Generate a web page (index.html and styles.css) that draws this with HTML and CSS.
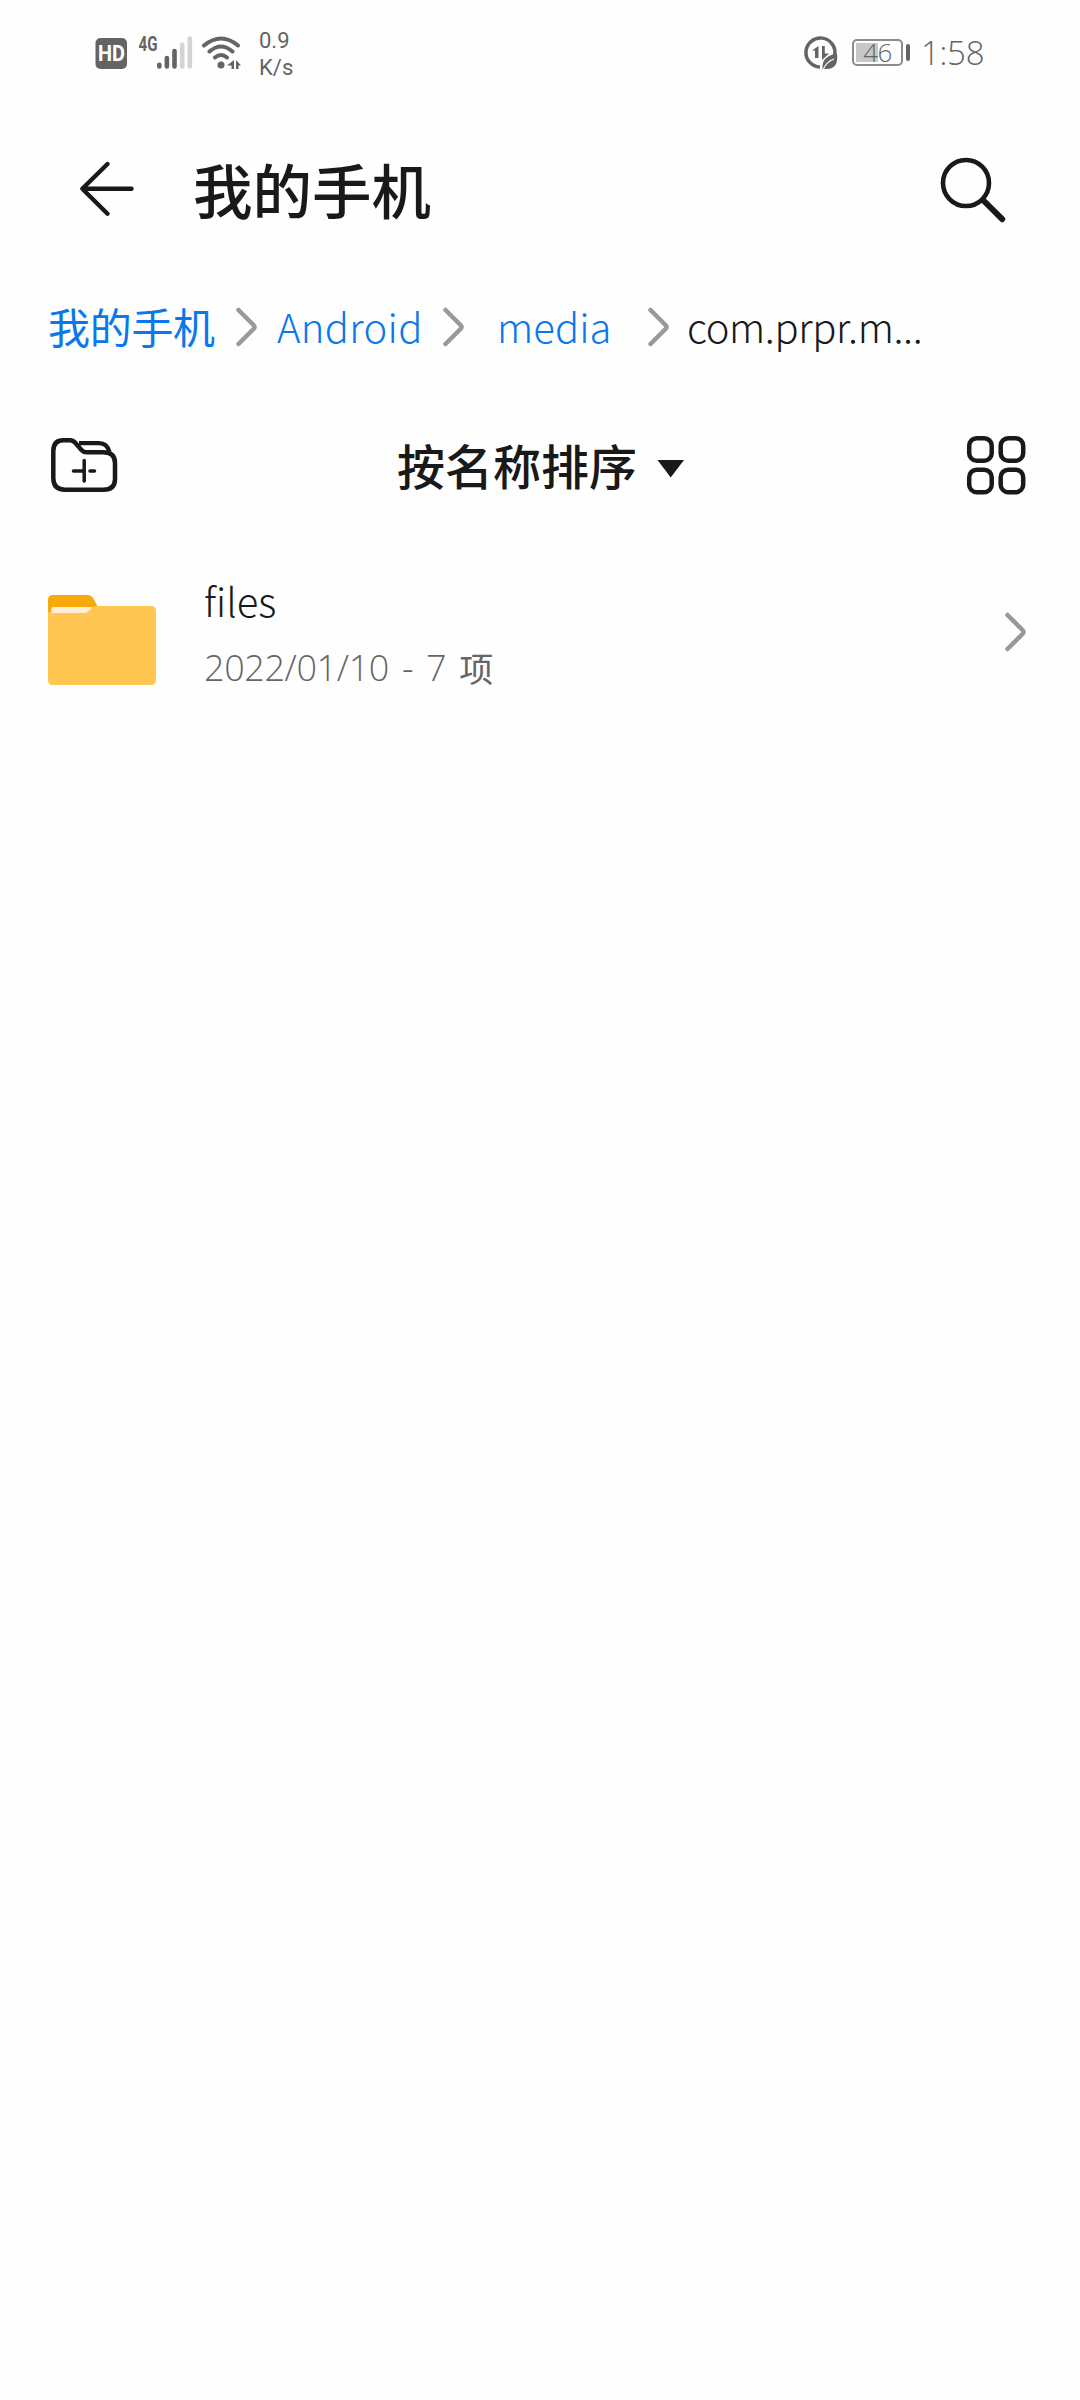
FILE: index.html
```html
<!DOCTYPE html>
<html lang="zh-CN">
<head>
<meta charset="utf-8">
<title>我的手机</title>
<link rel="stylesheet" href="styles.css">
</head>
<body>
<header class="status">
  <svg class="status-left" width="166" height="40" viewBox="90 32 166 40">
    <rect x="95.500" y="38" width="31.500" height="31" rx="5" fill="#646464"/>
    <text class="hd" x="98" y="61" textLength="27" lengthAdjust="spacingAndGlyphs">HD</text>
    <text class="g4" x="138.500" y="51" textLength="19" lengthAdjust="spacingAndGlyphs">4G</text>
    <g stroke="#646464" stroke-width="4.600" stroke-linecap="round"><path d="M159.300 64.800v1.700M166.900 58v8.500M174.500 51v15.500"/><path stroke="#d4d4d4" d="M182.200 44.500v22M189.800 38.500v28"/></g>
    <g fill="none" stroke="#646464" stroke-width="4" stroke-linecap="round"><path d="M204 45.500Q221 31.500 238 45.500M209.500 51.500Q221 41.500 232.500 51.500M215 57.500Q221 52.500 227 57.500"/></g>
    <circle cx="221" cy="65" r="3.500" fill="#646464"/>
    <path fill="#646464" d="M234 60v9h-2.500v-3.500H227zM236 60l5 5.500h-2.500V69H236z"/>
  </svg>
  <div class="speed"><span>0.9</span><span>K/s</span></div>
  <svg class="saver" width="36" height="36" viewBox="803 35 36 36">
    <path fill="none" stroke="#646464" stroke-width="3.500" d="M834.700 55A14.500 14.500 0 1 0 820 67"/>
    <path fill="#646464" d="M818.500 46v12H815v-7.500h-3zM822 46h2.800v7.500h4.200L822 60z"/>
    <path fill="#646464" d="M837 53.500Q839 70 825 69L822.500 69.500Q821 56 837 53.500z"/>
    <path fill="none" stroke="#fff" stroke-width="1.200" d="M823 70Q826 62 834 59"/>
  </svg>
  <div class="battery"><span>46</span></div>
  <span class="clock">1:58</span>
</header>
<div class="titlebar">
  <svg width="60" height="60" viewBox="76 158 60 60"><path class="line" stroke-width="4.400" d="M131.500 188.800H82.500M107.500 164L82.300 188.800L107.500 213.800"/></svg>
  <h1>我的手机</h1>
  <svg class="search" width="70" height="70" viewBox="938 154 70 70"><circle class="line" cx="966" cy="183" r="23" stroke-width="4.600"/><path class="line" stroke-width="6" d="M984 201L1002.200 219.200"/></svg>
</div>
<nav class="crumbs">
  <a class="c1">我的手机</a>
  <svg class="chev" width="22" height="40" viewBox="0 0 22 40"><path d="M2.500 3L17.500 18Q19.500 20 17.500 22L2.500 37"/></svg>
  <a class="c2">Android</a>
  <svg class="chev" width="22" height="40" viewBox="0 0 22 40"><path d="M2.500 3L17.500 18Q19.500 20 17.500 22L2.500 37"/></svg>
  <a class="c3">media</a>
  <svg class="chev" width="22" height="40" viewBox="0 0 22 40"><path d="M2.500 3L17.500 18Q19.500 20 17.500 22L2.500 37"/></svg>
  <span class="c4">com.prpr.m...</span>
</nav>
<div class="toolbar">
  <svg class="new-folder" width="70" height="60" viewBox="49 436 70 60">
    <path class="line" stroke-width="4.500" d="M63.500 440.200H70Q73 440.200 75 442.500L81.500 450Q83.500 452.300 86.500 452.300H103Q115 452.300 115 463V479Q115 489.700 103.500 489.700H65Q53.300 489.700 53.300 478V451Q53.300 440.200 63.500 440.200z"/>
    <path fill="none" stroke="#191919" stroke-width="4.200" d="M79 443.200H99Q107 443.200 109.500 452"/>
    <path class="line" stroke-width="3.500" d="M84.200 460.500V481M73.500 471H84M90 471H94.500"/>
  </svg>
  <div class="sort"><span>按名称排序</span><svg width="28" height="20" viewBox="0 0 28 20"><path fill="#191919" d="M.500 1H27L13.700 18.500z"/></svg></div>
  <svg width="62" height="62" viewBox="965 434 62 62"><g class="line" stroke-width="4.500"><rect x="969.200" y="438.200" width="22.500" height="22.500" rx="7.500"/><rect x="1000.700" y="438.200" width="22.500" height="22.500" rx="7.500"/><rect x="969.200" y="469.700" width="22.500" height="22.500" rx="7.500"/><rect x="1000.700" y="469.700" width="22.500" height="22.500" rx="7.500"/></g></svg>
</div>
<main class="row">
  <svg class="folder" width="108" height="92" viewBox="48 594 108 92">
    <path fill="#f9a80c" d="M48 612V600Q48 595 53 595H87Q91 595 93 598L98 607V614H48z"/>
    <path fill="#ffc751" d="M48 612H88L94 606H151Q156 606 156 611V680Q156 685 151 685H53Q48 685 48 680z"/>
    <path fill="#fff0d5" d="M51.500 613V608.500Q51.500 607 53 607H93L89 611Q87 613 84 613z"/>
  </svg>
  <div class="info"><span class="name">files</span><span class="meta"><span class="date">2022/01/10 - 7</span><span class="unit">项</span></span></div>
  <svg class="chev" width="22" height="40" viewBox="0 0 22 40"><path d="M2.500 3L17.500 18Q19.500 20 17.500 22L2.500 37"/></svg>
</main>
</body>
</html>
```
FILE: styles.css
```css
body {
  margin: 0;
  width: 1080px;
  height: 2400px;
  background: #fefefe;
  color: #191919;
  font-family: "Noto Sans CJK SC", sans-serif;
}

svg { display: block; flex: none; }
span, a, h1 { white-space: nowrap; }

.line {
  fill: none;
  stroke: #191919;
  stroke-linecap: round;
  stroke-linejoin: round;
}

.status {
  display: flex;
  box-sizing: border-box;
  height: 104px;
  padding: 0 0 0 90px;
  color: #646464;
}

.status-left { margin-top: 32px; }
.hd { font: 700 22px Roboto, sans-serif; fill: #fff; }
.g4 { font: 700 20px Roboto, sans-serif; fill: #646464; }

.speed {
  display: flex;
  flex-direction: column;
  width: 546px;
  margin: 27px 0 0 3px;
  font: 400 22px/27px Roboto, sans-serif;
}

.saver { margin: 35px 0 0 -2px; }

.battery {
  position: relative;
  box-sizing: border-box;
  width: 51px;
  height: 27px;
  margin: 39px 0 0 13px;
  border: 2px solid #8b8b8b;
  border-radius: 5px;
  background: linear-gradient(#c8c8c8, #c8c8c8) 2px 2px / 22px 19px no-repeat;
  font: 300 26px/22px "Open Sans", sans-serif;
  letter-spacing: -0.5px;
  text-align: center;
}

.battery::after {
  content: "";
  position: absolute;
  top: 3px;
  right: -9px;
  width: 4px;
  height: 17px;
  border-radius: 2px;
  background: #646464;
}

.clock {
  margin: 30px 0 0 18px;
  font: 300 33px/46px "Open Sans", sans-serif;
  letter-spacing: -0.3px;
}

.titlebar {
  display: flex;
  height: 176px;
  padding-left: 76px;
}

.titlebar > svg { margin-top: 54px; }
.titlebar .search { margin: 50px 0 0 auto; padding-right: 72px; }

h1 {
  margin: 40px 0 0 57px;
  font-size: 59.500px;
  font-weight: 500;
  line-height: 88px;
}

.crumbs {
  display: flex;
  align-items: flex-start;
  height: 136px;
  padding-left: 48px;
  font-size: 40px;
  line-height: 60px;
  font-weight: 300;
  color: #191919;
}

.crumbs a { color: #0a78eb; }
.crumbs .chev { margin-top: 27px; }
.crumbs a, .c4 { margin-top: 16px; }
.crumbs .c1 { width: 188px; font-size: 42px; font-weight: 400; letter-spacing: -0.3px; }
.c2 { width: 166px; margin-left: 19px; letter-spacing: 0.3px; }
.c3 { width: 151px; margin-left: 32px; letter-spacing: 0.1px; }
.c4 { margin-left: 17px; letter-spacing: -0.4px; }

.chev path {
  fill: none;
  stroke: #999;
  stroke-width: 4.5;
  stroke-linecap: round;
}

.toolbar {
  display: flex;
  justify-content: space-between;
  align-items: center;
  height: 98px;
  padding: 0 53px 0 49px;
}

.new-folder { margin-top: 2px; }

.sort {
  display: flex;
  align-items: center;
  gap: 20px;
  margin: -2px 2px 0 0;
  font-size: 48px;
  font-weight: 500;
}

.sort svg { margin-top: 9px; }

.row {
  display: flex;
  height: 160px;
  padding: 52px 53px 0 48px;
}

.folder { margin-top: 28px; }
.info { display: flex; flex-direction: column; flex: 1; margin-left: 48px; }
.name { font-size: 40px; font-weight: 300; line-height: 60px; margin-top: 4px; }
.meta { display: flex; gap: 13px; color: #666; line-height: 50px; margin-top: 13px; }
.date { font: 300 36px/50px "Open Sans", sans-serif; letter-spacing: -0.4px; word-spacing: 4px; }
.unit { font-size: 34px; }
.row .chev { margin-top: 46px; }
```
